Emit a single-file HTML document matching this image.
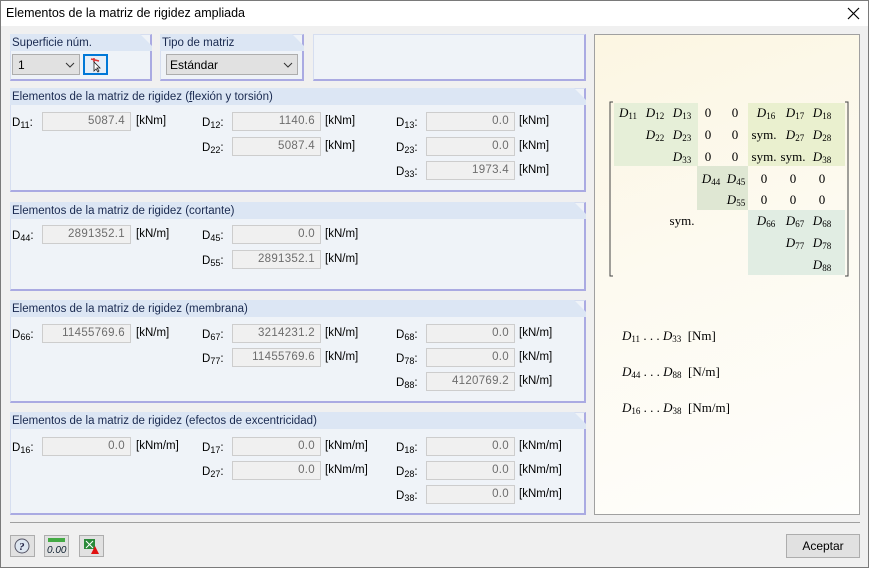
<!DOCTYPE html>
<html><head><meta charset="utf-8"><style>
*{box-sizing:border-box;margin:0;padding:0}
body{width:869px;height:568px;position:relative;background:#f0f0f0;font-family:"Liberation Sans",sans-serif;font-size:12px;color:#000;overflow:hidden}
.win{position:absolute;left:0;top:0;width:869px;height:568px;border:1px solid #7a7a7a}
.title{position:absolute;left:1px;top:1px;width:867px;height:25px;background:#fff}
.title span{position:absolute;left:5px;top:5px;font-size:12.5px}
.p{position:absolute;background:#eff3f8;border-left:1px solid #d6def0;border-top:1px solid #d6def0;border-right:2px solid #aaaae2;border-bottom:2px solid #aaaae2}
.h{position:absolute;left:-1px;top:-1px;right:-2px;height:17px;background:#dce6f4;clip-path:polygon(0 0,calc(100% - 12px) 0,100% 12px,100% 100%,0 100%)}
.h span{position:absolute;left:2px;top:3px;color:#1a2a50;font-size:11.5px;line-height:13px}
.l{position:absolute;font-size:11.5px;line-height:14px}
.l sub{font-size:9px;vertical-align:-2px;line-height:1}
.i{position:absolute;width:89px;height:19px;background:#f0f0f0;border:1px solid #cdcdcd;text-align:right;padding-right:5px;line-height:17px;color:#6d6d6d;font-size:11.5px;letter-spacing:.3px}
.u{position:absolute;font-size:11.5px}
.m{position:absolute;font-family:"Liberation Serif",serif;font-style:italic;font-size:13px;text-align:center;width:28px;line-height:16px}
.m sub{font-style:normal;font-size:9px;vertical-align:-2px;line-height:1}
.n{font-style:normal}
.btn{position:absolute;top:535px;width:25px;height:22px;background:#e1e1e1;border:1px solid #adadad}
</style></head><body>
<div class="win"></div>
<div class="title"><span>Elementos de la matriz de rigidez ampliada</span>
<svg style="position:absolute;left:846px;top:6px" width="13" height="13"><path d="M1 1L12 12M12 1L1 12" stroke="#000" stroke-width="1.2"/></svg></div>

<div class="p" style="left:10px;top:34px;width:142px;height:47px"><div class="h"><span>Superficie núm.</span></div></div>
<div style="position:absolute;left:12px;top:54px;width:68px;height:21px;background:#e1e1e1;border:1px solid #adadad"><span style="position:absolute;left:5px;top:3px">1</span><svg style="position:absolute;left:52px;top:7px" width="10" height="6"><path d="M1 1L5 5L9 1" stroke="#333" fill="none"/></svg></div>
<div style="position:absolute;left:83px;top:54px;width:25px;height:21px;background:#e5eef8;border:2px solid #0078d7"><svg width="21" height="17"><path d="M6 3L14 5M9 2l0 4" stroke="#d33" stroke-width="1.5"/><path d="M9 6L9 15L11 13L13 16L14 15L12 12L15 12Z" fill="#fff" stroke="#222" stroke-width=".8"/></svg></div>

<div class="p" style="left:160px;top:34px;width:144px;height:47px"><div class="h"><span>Tipo de matriz</span></div></div>
<div style="position:absolute;left:166px;top:54px;width:132px;height:21px;background:#e1e1e1;border:1px solid #adadad"><span style="position:absolute;left:3px;top:3px">Estándar</span><svg style="position:absolute;left:116px;top:7px" width="10" height="6"><path d="M1 1L5 5L9 1" stroke="#333" fill="none"/></svg></div>

<div class="p" style="left:313px;top:34px;width:273px;height:47px"></div>

<!-- section 1 -->
<div class="p" style="left:10px;top:88px;width:576px;height:104px"><div class="h"><span>Elementos de la matriz de rigidez (<u>f</u>lexión y torsión)</span></div></div>
<div class="l" style="left:12px;top:116px">D<sub>11</sub>:</div><div class="i" style="left:42px;top:112px">5087.4</div><div class="u" style="left:136px;top:115px">[kNm]</div>
<div class="l" style="left:202px;top:116px">D<sub>12</sub>:</div><div class="i" style="left:232px;top:112px">1140.6</div><div class="u" style="left:325px;top:115px">[kNm]</div>
<div class="l" style="left:202px;top:141px">D<sub>22</sub>:</div><div class="i" style="left:232px;top:137px">5087.4</div><div class="u" style="left:325px;top:140px">[kNm]</div>
<div class="l" style="left:396px;top:116px">D<sub>13</sub>:</div><div class="i" style="left:426px;top:112px">0.0</div><div class="u" style="left:519px;top:115px">[kNm]</div>
<div class="l" style="left:396px;top:141px">D<sub>23</sub>:</div><div class="i" style="left:426px;top:137px">0.0</div><div class="u" style="left:519px;top:140px">[kNm]</div>
<div class="l" style="left:396px;top:165px">D<sub>33</sub>:</div><div class="i" style="left:426px;top:161px">1973.4</div><div class="u" style="left:519px;top:164px">[kNm]</div>

<!-- section 2 -->
<div class="p" style="left:10px;top:202px;width:576px;height:89px"><div class="h"><span>Elementos de la matriz de rigidez (cortante)</span></div></div>
<div class="l" style="left:12px;top:229px">D<sub>44</sub>:</div><div class="i" style="left:42px;top:225px">2891352.1</div><div class="u" style="left:136px;top:228px">[kN/m]</div>
<div class="l" style="left:202px;top:229px">D<sub>45</sub>:</div><div class="i" style="left:232px;top:225px">0.0</div><div class="u" style="left:325px;top:228px">[kN/m]</div>
<div class="l" style="left:202px;top:254px">D<sub>55</sub>:</div><div class="i" style="left:232px;top:250px">2891352.1</div><div class="u" style="left:325px;top:253px">[kN/m]</div>

<!-- section 3 -->
<div class="p" style="left:10px;top:300px;width:576px;height:103px"><div class="h"><span>Elementos de la matriz de rigidez (membrana)</span></div></div>
<div class="l" style="left:12px;top:328px">D<sub>66</sub>:</div><div class="i" style="left:42px;top:324px">11455769.6</div><div class="u" style="left:136px;top:327px">[kN/m]</div>
<div class="l" style="left:202px;top:328px">D<sub>67</sub>:</div><div class="i" style="left:232px;top:324px">3214231.2</div><div class="u" style="left:325px;top:327px">[kN/m]</div>
<div class="l" style="left:202px;top:352px">D<sub>77</sub>:</div><div class="i" style="left:232px;top:348px">11455769.6</div><div class="u" style="left:325px;top:351px">[kN/m]</div>
<div class="l" style="left:396px;top:328px">D<sub>68</sub>:</div><div class="i" style="left:426px;top:324px">0.0</div><div class="u" style="left:519px;top:327px">[kN/m]</div>
<div class="l" style="left:396px;top:352px">D<sub>78</sub>:</div><div class="i" style="left:426px;top:348px">0.0</div><div class="u" style="left:519px;top:351px">[kN/m]</div>
<div class="l" style="left:396px;top:376px">D<sub>88</sub>:</div><div class="i" style="left:426px;top:372px">4120769.2</div><div class="u" style="left:519px;top:375px">[kN/m]</div>

<!-- section 4 -->
<div class="p" style="left:10px;top:412px;width:576px;height:103px"><div class="h"><span>Elementos de la matriz de rigidez (efectos de excentricidad)</span></div></div>
<div class="l" style="left:12px;top:441px">D<sub>16</sub>:</div><div class="i" style="left:42px;top:437px">0.0</div><div class="u" style="left:136px;top:440px">[kNm/m]</div>
<div class="l" style="left:202px;top:441px">D<sub>17</sub>:</div><div class="i" style="left:232px;top:437px">0.0</div><div class="u" style="left:325px;top:440px">[kNm/m]</div>
<div class="l" style="left:202px;top:465px">D<sub>27</sub>:</div><div class="i" style="left:232px;top:461px">0.0</div><div class="u" style="left:325px;top:464px">[kNm/m]</div>
<div class="l" style="left:396px;top:441px">D<sub>18</sub>:</div><div class="i" style="left:426px;top:437px">0.0</div><div class="u" style="left:519px;top:440px">[kNm/m]</div>
<div class="l" style="left:396px;top:465px">D<sub>28</sub>:</div><div class="i" style="left:426px;top:461px">0.0</div><div class="u" style="left:519px;top:464px">[kNm/m]</div>
<div class="l" style="left:396px;top:489px">D<sub>38</sub>:</div><div class="i" style="left:426px;top:485px">0.0</div><div class="u" style="left:519px;top:488px">[kNm/m]</div>

<!-- right panel -->
<div style="position:absolute;left:594px;top:34px;width:266px;height:481px;border:1px solid #a0a0a0;background:linear-gradient(160deg,#fcf6e2 0%,#fdfaf0 45%,#fefefc 100%)"></div>
<div style="position:absolute;left:614px;top:103px;width:84px;height:63px;background:#e6efd8"></div>
<div style="position:absolute;left:748px;top:103px;width:97px;height:63px;background:#eaf0cf"></div>
<div style="position:absolute;left:697px;top:166px;width:51px;height:44px;background:#dfe7d3"></div>
<div style="position:absolute;left:748px;top:210px;width:97px;height:65px;background:#e1ede3"></div>
<svg style="position:absolute;left:608px;top:101px" width="242" height="177"><path d="M5 1H2V175H5M237 1H240V175H237" stroke="#444" fill="none" stroke-width="1"/></svg>
<div class="m" style="left:614px;top:105px">D<sub>11</sub></div><div class="m" style="left:641px;top:105px">D<sub>12</sub></div><div class="m" style="left:668px;top:105px">D<sub>13</sub></div><div class="m n" style="left:694px;top:105px">0</div><div class="m n" style="left:721px;top:105px">0</div><div class="m" style="left:752px;top:105px">D<sub>16</sub></div><div class="m" style="left:781px;top:105px">D<sub>17</sub></div><div class="m" style="left:808px;top:105px">D<sub>18</sub></div>
<div class="m" style="left:641px;top:127px">D<sub>22</sub></div><div class="m" style="left:668px;top:127px">D<sub>23</sub></div><div class="m n" style="left:694px;top:127px">0</div><div class="m n" style="left:721px;top:127px">0</div><div class="m n" style="left:750px;top:127px">sym.</div><div class="m" style="left:781px;top:127px">D<sub>27</sub></div><div class="m" style="left:808px;top:127px">D<sub>28</sub></div>
<div class="m" style="left:668px;top:149px">D<sub>33</sub></div><div class="m n" style="left:694px;top:149px">0</div><div class="m n" style="left:721px;top:149px">0</div><div class="m n" style="left:750px;top:149px">sym.</div><div class="m n" style="left:779px;top:149px">sym.</div><div class="m" style="left:808px;top:149px">D<sub>38</sub></div>
<div class="m" style="left:697px;top:171px">D<sub>44</sub></div><div class="m" style="left:722px;top:171px">D<sub>45</sub></div><div class="m n" style="left:750px;top:171px">0</div><div class="m n" style="left:779px;top:171px">0</div><div class="m n" style="left:808px;top:171px">0</div>
<div class="m" style="left:722px;top:192px">D<sub>55</sub></div><div class="m n" style="left:750px;top:192px">0</div><div class="m n" style="left:779px;top:192px">0</div><div class="m n" style="left:808px;top:192px">0</div>
<div class="m n" style="left:668px;top:213px">sym.</div><div class="m" style="left:752px;top:213px">D<sub>66</sub></div><div class="m" style="left:781px;top:213px">D<sub>67</sub></div><div class="m" style="left:808px;top:213px">D<sub>68</sub></div>
<div class="m" style="left:781px;top:235px">D<sub>77</sub></div><div class="m" style="left:808px;top:235px">D<sub>78</sub></div>
<div class="m" style="left:808px;top:257px">D<sub>88</sub></div>
<div class="m" style="left:622px;top:328px;width:auto;text-align:left">D<sub>11</sub> <span class="n">. . .</span> D<sub>33</sub> <span class="n">&nbsp;[Nm]</span></div>
<div class="m" style="left:622px;top:364px;width:auto;text-align:left">D<sub>44</sub> <span class="n">. . .</span> D<sub>88</sub> <span class="n">&nbsp;[N/m]</span></div>
<div class="m" style="left:622px;top:400px;width:auto;text-align:left">D<sub>16</sub> <span class="n">. . .</span> D<sub>38</sub> <span class="n">&nbsp;[Nm/m]</span></div>

<!-- bottom -->
<div style="position:absolute;left:10px;top:522px;width:850px;height:1px;background:#a0a0a0"></div>
<div class="btn" style="left:10px"><svg width="23" height="20"><circle cx="11" cy="10" r="7" fill="#dde6f0" stroke="#556" /><text x="8" y="14" font-size="11" font-family="Liberation Serif" font-style="italic" font-weight="bold" fill="#224">?</text></svg></div>
<div class="btn" style="left:44px"><svg width="23" height="20"><rect x="3" y="2" width="17" height="4" fill="#4a4"/><text x="2" y="17" font-size="10" font-family="Liberation Sans" font-style="italic" fill="#123">0.00</text></svg></div>
<div class="btn" style="left:79px"><svg width="23" height="20"><rect x="4" y="3" width="11" height="10" fill="#2a8a3a"/><path d="M6 5L13 12M13 5L6 12" stroke="#fff"/><path d="M11 18L15 10L19 18Z" fill="#e01010"/></svg></div>
<div style="position:absolute;left:786px;top:534px;width:74px;height:24px;background:#e1e1e1;border:1px solid #adadad;text-align:center;line-height:22px">Aceptar</div>
</body></html>
